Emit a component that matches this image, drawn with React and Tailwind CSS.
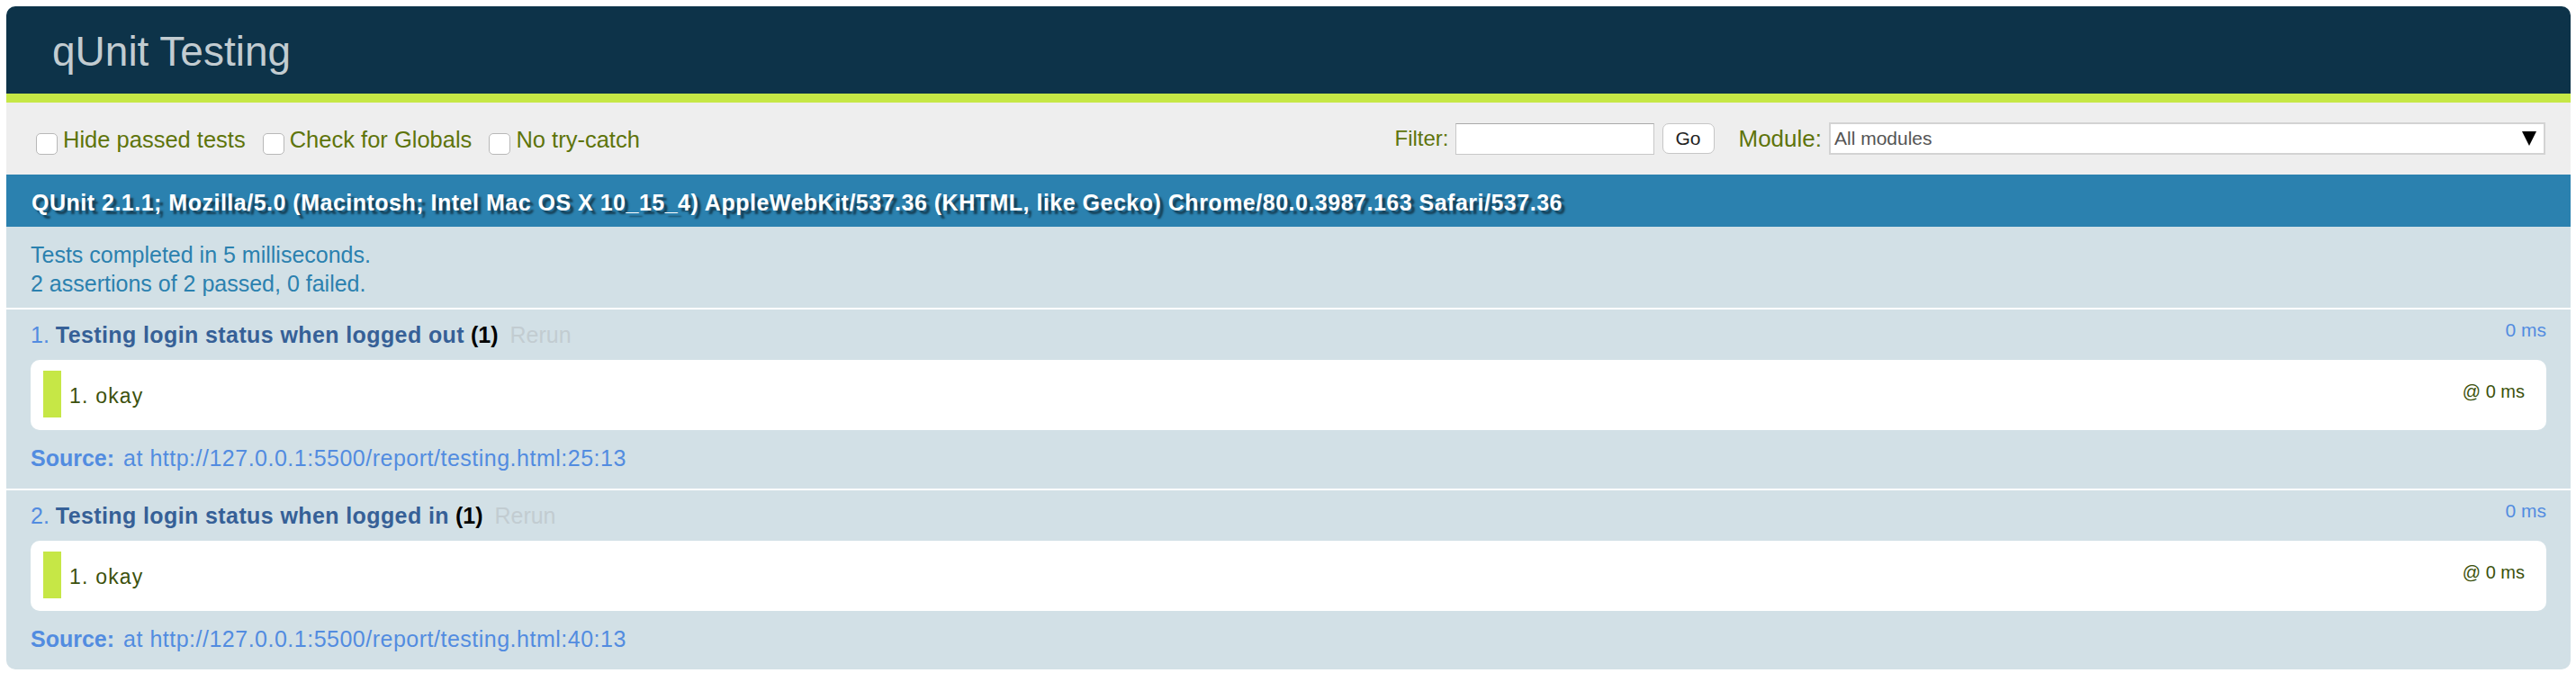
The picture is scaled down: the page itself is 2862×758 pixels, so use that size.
const tests = [
	{ n: 1, name: "Testing login status when logged out", source: "at http://127.0.0.1:5500/report/testing.html:25:13" },
	{ n: 2, name: "Testing login status when logged in", source: "at http://127.0.0.1:5500/report/testing.html:40:13" },
];

const Check = ({ label, first }) => (
	<label className={`flex items-start ${first ? "" : "ml-[19px]"}`}>
		<span className="mt-[5px] h-[24px] w-[24px] rounded-[5px] border border-[#b8b8b8] bg-white" />
		<span className="ml-[6px]">{label}</span>
	</label>
);

const TestItem = ({ test, last }) => (
	<li
		className={`bg-[#D2E0E6] px-[27px] pt-[12px] pb-[18px] text-[#528CE0] ${last ? "rounded-b-[10px]" : "border-b-2 border-white"}`}
	>
		{/* title row */}
		<div className="flex items-start justify-between">
			<div className="text-[25px] leading-[32px]">
				{test.n}.{" "}
				<strong className="font-bold tracking-[0.4px] text-[#366097]">{test.name}</strong>{" "}
				<b className="font-bold text-black">(1)</b>{" "}
				<a className="ml-[6px] text-[#C2CCD1]">Rerun</a>
			</div>
			<span className="text-[21px] leading-[22px]">0 ms</span>
		</div>

		{/* assertions */}
		<ol className="mt-[12px] rounded-[10px] bg-white px-[14px] pt-[12px] pb-[14px]">
			<li className="flex h-[52px] items-start justify-between border-l-[20px] border-[#C6E746] pt-[14px] pl-[9px] pr-[10px] text-[#3C510C]">
				<span className="text-[23px] leading-[28px] tracking-[1.2px]">1. okay</span>
				<span className="-mt-[2px] text-[20px] leading-[22px]">@ 0 ms</span>
			</li>
		</ol>

		{/* source */}
		<div className="mt-[15px] flex text-[25px] leading-[32px]">
			<b className="font-bold">Source:</b>
			<span className="ml-[10px] tracking-[0.5px]">{test.source}</span>
		</div>
	</li>
);

export default function App() {
	return (
		<div className="min-h-screen bg-white pt-[7px] pl-[7px] pr-[6px] font-['Liberation_Sans',Arial,sans-serif]">
			<h1 className="h-[97px] rounded-t-[10px] bg-[#0D3349] pl-[51px] pt-[28px] text-[46px] leading-[45px] font-normal text-[#C2CCD1]">
				qUnit Testing
			</h1>
			<div className="h-[10px] bg-[#C6E746]" />

			{/* toolbar */}
			<div className="flex h-[80px] justify-between bg-[#EEEEEE] pl-[33px] pr-[28px] leading-[24px] text-[#5E740B]">
				<div className="flex items-start pt-[29px] text-[25.5px]">
					<Check label="Hide passed tests" first />
					<Check label="Check for Globals" />
					<Check label="No try-catch" />
				</div>
				<div className="flex items-center self-start pt-[22px] text-[24px]">
					<span>Filter:</span>
					<span className="ml-[7px] h-[35px] w-[221px] border border-[#c8c8c8] border-t-[#a9a9a9] bg-white" />
					<span className="ml-[9px] flex h-[34px] w-[58px] items-center justify-center rounded-[7px] border border-[#c6c6c6] bg-white text-[21px] text-[#222]">
						Go
					</span>
					<span className="ml-[27px] text-[26px]">Module:</span>
					<div className="ml-[8px] flex h-[36px] w-[796px] items-center justify-between border-2 border-[#d3d3d3] bg-white pl-[4px] pr-[8px]">
						<span className="text-[21px] text-[#555]">All modules</span>
						<svg width="16" height="16" viewBox="0 0 16 16">
							<path d="M0 0h16L8 16z" fill="#000" />
						</svg>
					</div>
				</div>
			</div>

			{/* user agent */}
			<div className="bg-[#2B81AF] pl-[28px] pt-[15px] pb-[11px] text-[25px] font-bold leading-[32px] tracking-[0.5px] text-white [text-shadow:rgba(0,0,0,0.5)_4px_4px_2px]">
				QUnit 2.1.1; Mozilla/5.0 (Macintosh; Intel Mac OS X 10_15_4) AppleWebKit/537.36 (KHTML, like Gecko) Chrome/80.0.3987.163 Safari/537.36
			</div>

			{/* result */}
			<div className="border-b-2 border-white bg-[#D2E0E6] px-[27px] pt-[15px] pb-[11px] text-[25px] leading-[32px] text-[#2B81AF]">
				<div>Tests completed in 5 milliseconds.</div>
				<div>2 assertions of 2 passed, 0 failed.</div>
			</div>

			<ol className="list-none">
				{tests.map((t, i) => (
					<TestItem key={t.n} test={t} last={i === tests.length - 1} />
				))}
			</ol>
		</div>
	);
}
